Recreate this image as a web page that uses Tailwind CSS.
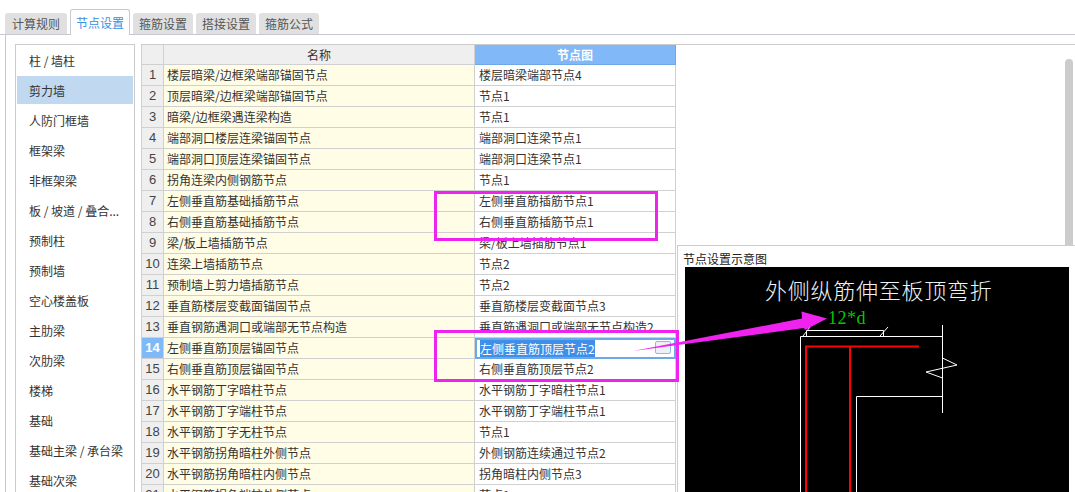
<!DOCTYPE html>
<html lang="zh">

<head>
    <meta charset="UTF-8">
    <title>节点设置</title>
    <script src="https://cdn.jsdelivr.net/npm/@tailwindcss/browser@4"></script>
</head>

<body class="bg-white overflow-hidden font-['Noto_Sans_CJK_SC','Noto_Sans',sans-serif] text-[12px] text-[#333]">
    <div class="relative w-[1075px] h-[492px] overflow-hidden">
        <!-- Tabs -->
        <div class="flex items-end gap-[3px] h-[35px] pl-[5px] border-b border-[#c8c8d0]">
            <div class="w-[62px] h-[21px] bg-[#e0e0e0] rounded-t-[3px] text-center leading-[21px] text-[#555]">计算规则</div>
            <div class="w-[60px] h-[26px] -mb-px bg-white border border-b-0 border-[#c8c8d0] rounded-t-[3px] text-center leading-[25px] text-[#3b8fe0]">节点设置</div>
            <div class="w-[60px] h-[21px] bg-[#e0e0e0] rounded-t-[3px] text-center leading-[21px] text-[#555]">箍筋设置</div>
            <div class="w-[60px] h-[21px] bg-[#e0e0e0] rounded-t-[3px] text-center leading-[21px] text-[#555]">搭接设置</div>
            <div class="w-[60px] h-[21px] bg-[#e0e0e0] rounded-t-[3px] text-center leading-[21px] text-[#555]">箍筋公式</div>
        </div>

        <div class="flex h-[457px] ml-[5px] border-l border-[#c8c8d0] pt-[9px] pl-[9px]">
            <!-- Sidebar -->
            <div id="sidebar" class="w-[120px] h-[470px] shrink-0 flex flex-col gap-[2px] border border-[#cccccc] p-px"></div>

            <!-- Grid -->
            <div class="flex-1 ml-[6px] border-t border-[#cccccc]">
                <div id="grid" class="w-[535px] grid grid-cols-[22px_311px_201px] border-l border-[#d0d0d0]">
                    <div class="h-[20px] bg-[#efefef] border-r border-b border-[#d0d0d0]"></div>
                    <div class="h-[20px] bg-[#efefef] border-r border-b border-[#d0d0d0] text-center leading-[19px]">名称</div>
                    <div class="h-[20px] bg-[#80b8f8] border-r border-b border-[#6fa8e8] text-center leading-[19px] text-white font-bold">节点图</div>
                </div>
            </div>
        </div>

        <!-- Scrollbar -->
        <div class="absolute left-[1065px] top-[59px] w-[8px] h-[190px] bg-[#cccccc] rounded-t-[4px]"></div>

        <!-- Preview popup -->
        <div class="absolute left-[677px] top-[245px] right-0 bottom-0 bg-white border-t border-l border-[#cccccc] pl-[7px]">
            <div class="h-[21px] pt-[4px] leading-[17px] text-[#222] -ml-[2px]">节点设置示意图</div>
            <div class="relative w-[384px] h-[225px] bg-black">
                <svg class="absolute inset-0" width="384" height="225" viewBox="0 0 384 225" fill="none">
                    <g stroke="#ffffff" stroke-width="1">
                        <path d="M115.5 225V69.5H257.5"/>
                        <path d="M171.5 225V129.5H257.5"/>
                        <path d="M257.5 58V146"/>
                        <path d="M257.5 91L272 98L241 105L257.5 111"/>
                        <path d="M121.5 69V63.5H198.5V69"/>
                        <path d="M118 69L125 60"/>
                        <path d="M195 69L203 60"/>
                    </g>
                    <g stroke="#ff0000" stroke-width="2">
                        <path d="M121 225V79.5H234"/>
                        <path d="M165 225V79.5"/>
                    </g>
                </svg>
                <div class="absolute left-[80px] top-[7px] whitespace-nowrap text-[22px] leading-[30px] tracking-[0.75px] font-light text-[#eef4fa]">外侧纵筋伸至板顶弯折</div>
                <div class="absolute left-[143px] top-[40px] font-['Liberation_Serif',serif] text-[18px] leading-[22px] tracking-[0.5px] text-[#00c800]">12*d</div>
            </div>
        </div>

        <!-- Annotations -->
        <div class="absolute left-[434px] top-[191px] w-[224px] h-[50px] border-[3px] border-[#f022f0]"></div>
        <div class="absolute left-[434px] top-[330px] w-[245px] h-[52px] border-[3px] border-[#f022f0]"></div>
        <svg class="absolute inset-0 pointer-events-none" width="1075" height="492" viewBox="0 0 1075 492">
            <polygon points="633,351 802,318.5 801.5,311.5 827,318.5 805,330 804,328" fill="#f022f0"/>
        </svg>
    </div>

    <script>
        const sideItems = ['柱 / 墙柱', '剪力墙', '人防门框墙', '框架梁', '非框架梁', '板 / 坡道 / 叠合...', '预制柱', '预制墙', '空心楼盖板', '主肋梁', '次肋梁', '楼梯', '基础', '基础主梁 / 承台梁', '基础次梁'];
        const rows = [
            ['楼层暗梁/边框梁端部锚固节点', '楼层暗梁端部节点4'],
            ['顶层暗梁/边框梁端部锚固节点', '节点1'],
            ['暗梁/边框梁遇连梁构造', '节点1'],
            ['端部洞口楼层连梁锚固节点', '端部洞口连梁节点1'],
            ['端部洞口顶层连梁锚固节点', '端部洞口连梁节点1'],
            ['拐角连梁内侧钢筋节点', '节点1'],
            ['左侧垂直筋基础插筋节点', '左侧垂直筋插筋节点1'],
            ['右侧垂直筋基础插筋节点', '右侧垂直筋插筋节点1'],
            ['梁/板上墙插筋节点', '梁/板上墙插筋节点1'],
            ['连梁上墙插筋节点', '节点2'],
            ['预制墙上剪力墙插筋节点', '节点2'],
            ['垂直筋楼层变截面锚固节点', '垂直筋楼层变截面节点3'],
            ['垂直钢筋遇洞口或端部无节点构造', '垂直筋遇洞口或端部无节点构造2'],
            ['左侧垂直筋顶层锚固节点', '左侧垂直筋顶层节点2'],
            ['右侧垂直筋顶层锚固节点', '右侧垂直筋顶层节点2'],
            ['水平钢筋丁字暗柱节点', '水平钢筋丁字暗柱节点1'],
            ['水平钢筋丁字端柱节点', '水平钢筋丁字端柱节点1'],
            ['水平钢筋丁字无柱节点', '节点1'],
            ['水平钢筋拐角暗柱外侧节点', '外侧钢筋连续通过节点2'],
            ['水平钢筋拐角暗柱内侧节点', '拐角暗柱内侧节点3'],
            ['水平钢筋拐角端柱外侧节点', '节点1']
        ];

        const sidebar = document.getElementById('sidebar');
        sideItems.forEach((name, i) => {
            const active = i === 1;
            sidebar.innerHTML += `<div class="h-[28px] shrink-0 pl-[12px] leading-[30px] whitespace-nowrap ${active ? 'bg-[#c0d8f0]' : ''}">${name}</div>`;
        });

        const grid = document.getElementById('grid');
        rows.forEach((row, i) => {
            const n = i + 1;
            if (n === 14) {
                // selected row, cell is in edit mode
                grid.innerHTML += `
                    <div class="h-[21px] bg-[#7fb9f8] border-r border-b border-[#d0d0d0] text-center leading-[20px] text-white font-bold text-[13px] font-['Liberation_Sans',sans-serif]">${n}</div>
                    <div class="h-[21px] bg-[#fffde6] border-r border-b border-[#d0d0d0] pl-[3px] leading-[20px] whitespace-nowrap">${row[0]}</div>
                    <div class="relative h-[21px] bg-white border-2 border-[#6aa8e8] pl-[3px] leading-[17px] whitespace-nowrap">
                        <span class="bg-[#3f8fe8] text-white">${row[1]}</span>
                        <div class="absolute left-[178px] top-[1px] w-[16px] h-[13px] bg-[#eef0f8] border border-[#8fb8e6] rounded-[2px]"></div>
                    </div>`;
            } else {
                grid.innerHTML += `
                    <div class="h-[21px] bg-[#efefef] border-r border-b border-[#d0d0d0] text-center leading-[20px] text-[13px] font-['Liberation_Sans',sans-serif] text-[#444]">${n}</div>
                    <div class="h-[21px] bg-[#fffde6] border-r border-b border-[#d0d0d0] pl-[3px] leading-[20px] whitespace-nowrap">${row[0]}</div>
                    <div class="h-[21px] bg-white border-r border-b border-[#d0d0d0] pl-[4px] leading-[20px] whitespace-nowrap">${row[1]}</div>`;
            }
        });
    </script>
</body>

</html>
